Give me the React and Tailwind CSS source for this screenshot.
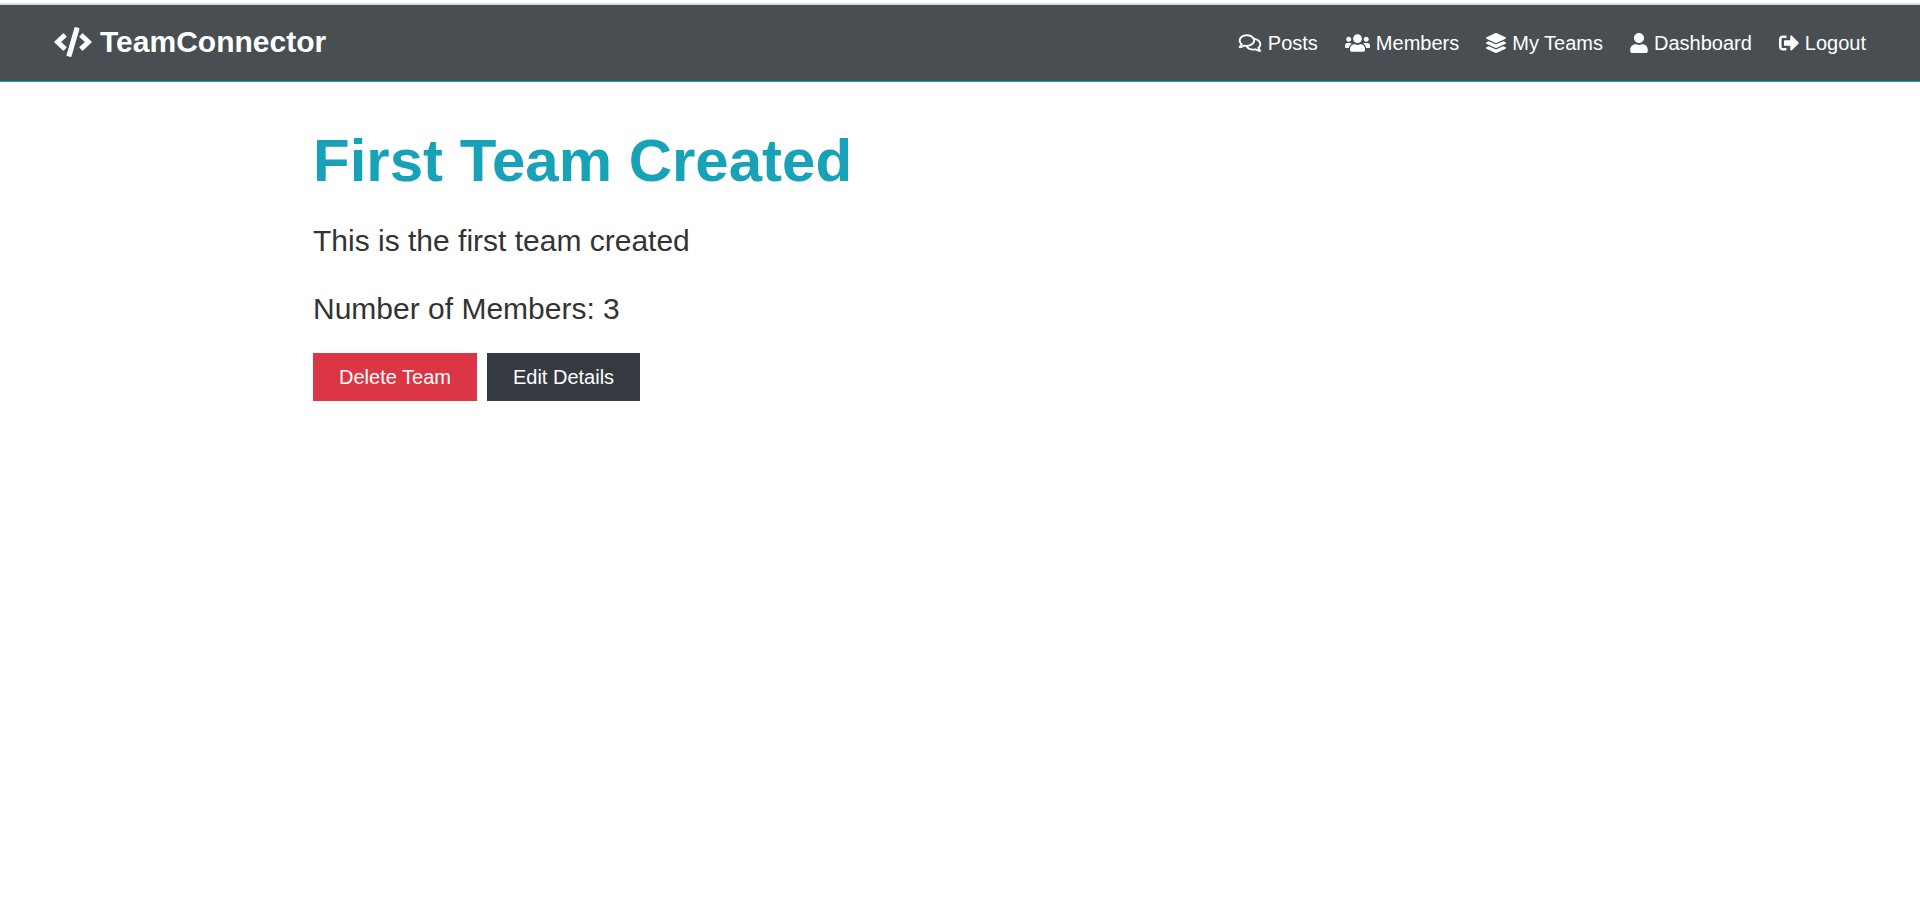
import { FaCode, FaRegComments, FaUsers, FaLayerGroup, FaUser, FaSignOutAlt } from "react-icons/fa";

const links = [
  { label: "Posts", Icon: FaRegComments, size: "w-6" },
  { label: "Members", Icon: FaUsers, size: "w-[25px]" },
  { label: "My Teams", Icon: FaLayerGroup, size: "w-5" },
  { label: "Dashboard", Icon: FaUser, size: "w-[18px]" },
  { label: "Logout", Icon: FaSignOutAlt, size: "w-5" },
];

function Navbar() {
  return (
    <header className="mt-[3px] border-t-2 border-[#dadade]">
      <nav className="flex items-center justify-between border-b border-[#17a2b8] bg-[#494e52] px-[54px] py-[14px] text-white">
        <a href="#home" className="flex items-center gap-2 pb-[2px] text-[30px] leading-[46px] font-bold">
          <FaCode className="h-[30px] w-[38px]" aria-hidden="true" />
          TeamConnector
        </a>
        <ul className="flex items-center gap-[27px]">
          {links.map(({ label, Icon, size }) => (
            <li key={label}>
              <a href={"#" + label.toLowerCase().replace(" ", "-")} className="flex items-center gap-[6px] text-xl leading-8">
                <Icon className={"h-5 shrink-0 " + size} aria-hidden="true" />
                {label}
              </a>
            </li>
          ))}
        </ul>
      </nav>
    </header>
  );
}

export default function App() {
  return (
    <div className="flow-root min-h-screen bg-white font-['Liberation_Sans',Arial,sans-serif] text-[#333]">
      <Navbar />
      <main className="mx-auto max-w-[1374px] px-10 pt-[43px]">
        <h1 className="text-[60px] leading-[72px] font-bold text-[#17a2b8]">First Team Created</h1>
        <p className="mt-5 text-[30px] leading-[48px]">This is the first team created</p>
        <p className="mt-5 text-[30px] leading-[48px]">Number of Members: 3</p>
        <div className="mt-5 flex gap-[10px]">
          <button type="button" className="bg-[#dc3545] px-[26px] py-2 text-xl leading-8 text-white">
            Delete Team
          </button>
          <button type="button" className="bg-[#343a40] px-[26px] py-2 text-xl leading-8 text-white">
            Edit Details
          </button>
        </div>
      </main>
    </div>
  );
}
